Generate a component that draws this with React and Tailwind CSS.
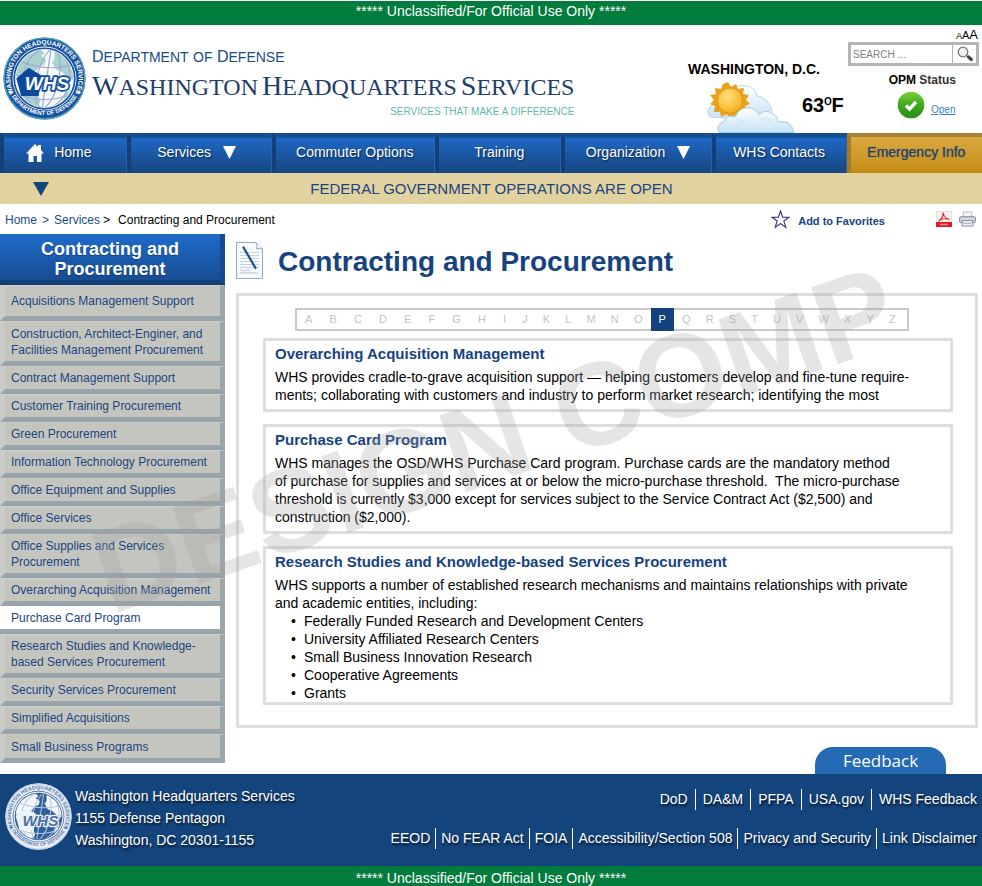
import React from "react";

const NAV = [
  { label: "Home", grow: "grow-[126]", shift: "pr-3", home: true },
  { label: "Services", grow: "grow-[145]", shift: "pr-2", menu: true },
  { label: "Commuter Options", grow: "grow-[164]" },
  { label: "Training", grow: "grow-[125]" },
  { label: "Organization", grow: "grow-[152]", menu: true },
  { label: "WHS Contacts", grow: "grow-[134]", shift: "pr-1" },
];

const SIDE = [
  ["Acquisitions Management Support", "h-9"],
  ["Construction, Architect-Enginer, and Facilities Management Procurement", "h-[45px]"],
  ["Contract Management Support", "h-7"],
  ["Customer Training Procurement", "h-7"],
  ["Green Procurement", "h-7"],
  ["Information Technology Procurement", "h-7"],
  ["Office Equipment and Supplies", "h-7"],
  ["Office Services", "h-7"],
  ["Office Supplies and Services Procurement", "h-11"],
  ["Overarching Acquisition Management", "h-7"],
  ["Purchase Card Program", "h-7"],
  ["Research Studies and Knowledge-based Services Procurement", "h-11"],
  ["Security Services Procurement", "h-7"],
  ["Simplified Acquisitions", "h-7"],
  ["Small Business Programs", "h-[29px]"],
];

const LETTERS = "ABCDEFGHIJKLMNOPQRSTUVWXYZ".split("");

const FOOTER_TOP = ["DoD", "DA&M", "PFPA", "USA.gov", "WHS Feedback"];
const FOOTER_BOTTOM = [
  "EEOD",
  "No FEAR Act",
  "FOIA",
  "Accessibility/Section 508",
  "Privacy and Security",
  "Link Disclaimer",
];

function Seal({ id, className, ring, ink, land, sea, badge, badgeInk, line, edge }) {
  return (
    <svg viewBox="0 0 100 100" className={"text-shadow-none " + className} role="img" aria-label="WHS seal">
      <defs>
        <path id={id + "-top"} d="M 12.2 66 A 41 41 0 1 1 87.8 66" />
        <path id={id + "-low"} d="M 11 72 A 45.5 45.5 0 0 0 89 72" />
        <clipPath id={id + "-globe"}>
          <circle cx="50" cy="50" r="34.500" />
        </clipPath>
      </defs>
      <circle cx="50" cy="50" r="49.500" fill={ring} />
      <circle cx="50" cy="50" r="48.600" fill="none" stroke={edge} strokeWidth="1.6" />
      <circle cx="50" cy="50" r="38.500" fill={sea} />
      <circle cx="50" cy="50" r="36.500" fill={sea} stroke={ring} strokeWidth="2" />
      <g clipPath={"url(#" + id + "-globe)"}>
        <path
          d="M14 40 L22 27 L33 18 L44 15 L50 19 L46 23 L52 27 L50 33 L44 35 L40 41 L34 42 L29 49 L18 52 Z M62 17 L70 20 L79 31 L85 43 L84 52 L76 47 L71 42 L64 39 L59 31 L62 27 Z M17 68 L33 67 L43 71 L45 78 L38 86 L24 79 Z M75 68 L85 60 L82 72 L72 80 Z"
          fill={land}
        />
        <g fill="none" stroke={line} strokeWidth="1.5">
          <ellipse cx="54" cy="50" rx="13" ry="36" transform="rotate(12 54 50)" />
          <ellipse cx="52" cy="50" rx="28" ry="37" transform="rotate(12 52 50)" />
          <path d="M58 14 L47 87 M20 29 Q52 42 83 34 M15 46 Q50 54 86 48 M20 69 Q50 82 82 69" />
        </g>
      </g>
      <path d="M31 37 L46 46 L43 71 L22 71 L16 50 Z" fill={badge} />
      <text
        x="53"
        y="64"
        textAnchor="middle"
        fontFamily="'Liberation Sans', Arial, sans-serif"
        fontWeight="700"
        fontStyle="italic"
        fontSize="23"
        fill={badgeInk}
        stroke={badge}
        strokeWidth="4"
        strokeLinejoin="round"
        paintOrder="stroke"
      >
        WHS
      </text>
      <g fontFamily="'Liberation Sans', Arial, sans-serif" fontWeight="700" fill={ink}>
        <text fontSize="7.900">
          <textPath href={"#" + id + "-top"} startOffset="50%" textAnchor="middle">
            WASHINGTON HEADQUARTERS SERVICES
          </textPath>
        </text>
        <text fontSize="7">
          <textPath href={"#" + id + "-low"} startOffset="50%" textAnchor="middle">
            DEPARTMENT OF DEFENSE
          </textPath>
        </text>
      </g>
      <circle cx="9" cy="66.500" r="1.800" fill={ink} />
      <circle cx="91" cy="66.500" r="1.800" fill={ink} />
    </svg>
  );
}

function Weather() {
  return (
    <svg viewBox="0 0 90 52" className="h-[52px] w-[90px]" aria-hidden="true">
      <defs>
        <linearGradient id="cloud" x1="0" y1="0" x2="0" y2="1">
          <stop offset="0" stopColor="#ffffff" />
          <stop offset="1" stopColor="#c4e2f6" />
        </linearGradient>
        <radialGradient id="sun" cx="40%" cy="35%" r="70%">
          <stop offset="0" stopColor="#ffe27a" />
          <stop offset="1" stopColor="#f5ae1c" />
        </radialGradient>
      </defs>
      <path
        d="M4 36 Q-1 30 6 24 Q8 14 22 12 Q30 2 42 5 Q50 7 51 15 Q62 16 66 30 L60 40 Z"
        fill="url(#cloud)"
        stroke="#bcd6e6"
        strokeWidth="1"
      />
      <path
        d="M22 1 L25 6 L30 3 L32 8 L38 7 L37 13 L43 14 L40 19 L44 23 L39 25 L41 31 L35 31 L34 37 L29 34 L24 38 L21 33 L15 36 L14 31 L8 31 L9 25 L4 23 L8 19 L4 14 L10 13 L9 7 L15 8 L17 3 Z"
        fill="#e9a11e"
      />
      <circle cx="24" cy="19.500" r="12.500" fill="url(#sun)" stroke="#dd9217" strokeWidth="0.8" />
      <path
        d="M13 51.500 Q9 43 19 40 Q20 33 29 36 Q34 25 44 27 Q51 28 53 34 Q59 27 67 33 Q72 35 72 41 Q85 38 88 51.500 Z"
        fill="url(#cloud)"
        stroke="#a9cbe0"
        strokeWidth="1"
      />
      <path d="M31 44 Q36 37 43 43 M54 40 Q60 34 65 41" fill="none" stroke="#d3e8f5" strokeWidth="2" />
    </svg>
  );
}

function Search() {
  return (
    <form
      className="flex h-6 w-[131px] border-[3px] border-[#b5b5b5] bg-white"
      onSubmit={(e) => e.preventDefault()}
    >
      <input
        type="text"
        aria-label="Search"
        placeholder="SEARCH ..."
        className="min-w-0 flex-1 px-0.5 text-[10px] text-[#555] outline-none placeholder:text-[#808080]"
      />
      <button type="submit" aria-label="Go" className="flex w-6 items-center justify-center border-l border-[#b5b5b5]">
        <svg viewBox="0 0 16 16" className="size-4" aria-hidden="true">
          <path d="M9.500 9.500 L11 11" stroke="#888" strokeWidth="1.5" />
          <path d="M11.500 11 L14.300 13.500" stroke="#444" strokeWidth="3.200" strokeLinecap="round" />
          <circle cx="6" cy="6" r="4.800" fill="#e9eef2" stroke="#777" strokeWidth="1.300" />
          <path d="M3.500 5.500 Q4 3.500 6 3.200" fill="none" stroke="#fff" strokeWidth="1.200" />
        </svg>
      </button>
    </form>
  );
}

function Caps({ words, big, small }) {
  return words.map((w, i) => (
    <React.Fragment key={w}>
      {i > 0 && " "}
      <span className={w === "of" ? small : big}>{w === "of" ? "OF" : w[0]}</span>
      {w !== "of" && <span className={small}>{w.slice(1).toUpperCase()}</span>}
    </React.Fragment>
  ));
}

function Header() {
  return (
    <header className="flex h-[108px] justify-between">
      <div className="flex pt-3 pl-[3px]">
        <Seal
          id="seal"
          className="size-[83px] shrink-0"
          ring="#16529f"
          ink="#ffffff"
          land="#a9d3cc"
          sea="#f4f9fa"
          badge="#0b4a9b"
          badgeInk="#ffffff"
          line="#a3a8d8"
          edge="#4fa3b4"
        />
        <div className="flex flex-col pt-2.5 pl-[6px]">
          <p className="h-5 leading-5 whitespace-nowrap text-[#1b4c8a]">
            <Caps words={["Department", "of", "Defense"]} big="text-[16px]" small="text-[14px]" />
          </p>
          <h1 className="mt-[3px] h-8 font-['Liberation_Serif',serif] leading-8 whitespace-nowrap text-[#1f3d6b]">
            <Caps words={["Washington", "Headquarters", "Services"]} big="text-[28px]" small="text-[24px]" />
          </h1>
          <p className="mt-0.5 text-right text-[10px] leading-4 whitespace-nowrap text-[#5db9ab]">
            SERVICES THAT MAKE A DIFFERENCE
          </p>
        </div>
      </div>

      <div className="flex">
        <div className="w-[160px] pt-9">
          <p className="text-[14px] leading-4 font-bold whitespace-nowrap text-black">WASHINGTON, D.C.</p>
          <div className="flex items-center gap-1.5 pt-1 pl-[18px]">
            <Weather />
            <p className="pb-1 text-[20px] leading-6 font-bold whitespace-nowrap text-black">
              63<span className="font-normal">º</span>F
            </p>
          </div>
        </div>
        <div className="flex w-[134px] flex-col pr-[3px]">
          <p className="flex h-[17px] items-baseline justify-end pr-px text-black">
            <span className="text-[9px]">A</span>
            <span className="text-[11px]">A</span>
            <span className="text-[13px]">A</span>
          </p>
          <Search />
          <p className="mt-1.5 pr-[23px] text-right text-[12px] leading-4 font-bold whitespace-nowrap text-black">
            OPM <span className="text-[#333]">Status</span>
          </p>
          <div className="flex items-center gap-1.5 pt-[3px] pl-[49px]">
            <svg viewBox="0 0 28 28" className="size-7" aria-hidden="true">
              <defs>
                <linearGradient id="ok" x1="0" y1="0" x2="0" y2="1">
                  <stop offset="0" stopColor="#7fd03c" />
                  <stop offset="0.5" stopColor="#3fa81c" />
                  <stop offset="1" stopColor="#2b8c1c" />
                </linearGradient>
              </defs>
              <circle cx="14" cy="14" r="13.300" fill="url(#ok)" />
              <path d="M9 14.500 L12.500 18 L19 11" fill="none" stroke="#fff" strokeWidth="3.400" />
            </svg>
            <a href="#open" className="pt-2.5 text-[10px] leading-4 text-[#2f7fd6] underline">
              Open
            </a>
          </div>
        </div>
      </div>
    </header>
  );
}

function Nav() {
  return (
    <nav className="flex h-10 text-[14px] text-white">
      {NAV.map((n) => (
        <a
          key={n.label}
          href="#nav"
          className={
            n.grow +
            " flex basis-0 items-center justify-center border-t-[5px] border-r border-l-[4px] border-t-[#14508f] border-r-[#2563ae] border-l-[#134078] bg-linear-to-b from-[#1e68c6] to-[#17467f] pb-1.5 whitespace-nowrap text-shadow-[1px_1px_2px_rgba(0,0,0,0.6)]"
          }
        >
          <span className={"flex items-center " + (n.shift || "")}>
            {n.home && (
              <svg viewBox="0 0 18 18" className="mr-2.5 size-[18px]" aria-hidden="true">
                <path
                  d="M9 0 L12 3 V1 H15 V6 L18 9.500 H15.500 V18 H11 V12 H7.500 V18 H2.500 V9.500 H0 Z"
                  fill="#fff"
                />
              </svg>
            )}
            {n.label}
            {n.menu && (
              <svg viewBox="0 0 12 12" className="ml-3 size-[13px]" aria-hidden="true">
                <path d="M0 0 H12 L6 12 Z" fill="#fff" />
              </svg>
            )}
          </span>
        </a>
      ))}
      <a
        href="#emergency"
        className="flex grow-[136] basis-0 items-center justify-center border-t-[4px] border-l-[4px] border-t-[#a5843a] border-l-[#a57c22] bg-linear-to-b from-[#dba93f] to-[#c48d12] pb-1.5 whitespace-nowrap text-[#1f4272] text-shadow-[0_0_1px_rgba(31,66,114,0.7)]"
      >
        Emergency Info
      </a>
    </nav>
  );
}

function Crumbs() {
  return (
    <div className="flex h-[30px] items-center justify-between pr-1.5 pl-[5px]">
      <div className="flex items-center pt-0.5 text-[12px]">
        <a href="#home" className="text-[#1b4c8a]">
          Home
        </a>
        <span className="px-[5px] text-[#1b4c8a]">&gt;</span>
        <a href="#services" className="text-[#1b4c8a]">
          Services
        </a>
        <span className="pl-[3px] text-black">&gt;</span>
        <span className="pl-2 text-black">Contracting and Procurement</span>
      </div>
      <div className="flex items-center">
        <svg viewBox="0 0 20 20" className="size-[19px]" aria-hidden="true">
          <path
            d="M10 1 L12.200 7.500 L19 7.700 L13.500 11.600 L15.600 18.300 L10 14.200 L4.400 18.300 L6.500 11.600 L1 7.700 L7.800 7.500 Z"
            fill="none"
            stroke="#40308c"
            strokeWidth="1.200"
          />
        </svg>
        <a href="#favorites" className="pt-1 pl-2 text-[11px] font-bold text-[#1b4480]">
          Add to Favorites
        </a>
        <svg viewBox="0 0 16 16" className="ml-[51px] size-4" aria-hidden="true">
          <rect x="0.500" y="0.500" width="15" height="15" fill="#f6f1f1" stroke="#e6dede" />
          <path
            d="M7 1.500 Q8 7 13.500 8.300 Q6 6.500 2.500 10.300 Q7.500 7 7 1.500"
            fill="none"
            stroke="#e0262a"
            strokeWidth="1.100"
          />
          <rect y="11" width="16" height="5" fill="#e01a20" />
          <path d="M4.500 13.500 H11.500" stroke="#f6b5b5" strokeWidth="1.500" strokeDasharray="2 0.700" />
        </svg>
        <svg viewBox="0 0 18 16" className="ml-[7px] h-4 w-[17px]" aria-hidden="true">
          <path d="M4.500 6 V0.500 H13.500 V6" fill="#f2f4f8" stroke="#b5b8c2" />
          <rect x="0.500" y="5.500" width="17" height="6.500" rx="1.500" fill="#c4c7d2" stroke="#9092a2" />
          <path d="M2 8 H16" stroke="#eceef3" />
          <path d="M4 9.500 H14 L15 15.500 H3 Z" fill="#eef0f6" stroke="#85889a" />
          <path d="M5 12.500 H13" stroke="#a0a3b0" />
        </svg>
      </div>
    </div>
  );
}

function Sidebar() {
  return (
    <aside className="w-[225px] shrink-0 text-[12px] leading-4">
      <h2 className="flex h-[51px] items-center justify-center border-r-[5px] border-b-[5px] border-r-[#174a8c] border-b-[#133f78] bg-linear-to-b from-[#1e6bca] to-[#174d93] px-8 pt-1 text-center text-[18px] leading-5 font-bold text-white text-shadow-[0_1px_1px_rgba(0,0,0,0.3)]">
        Contracting and Procurement
      </h2>
      <ul>
        {SIDE.map(([label, height]) => {
          const current = label === "Purchase Card Program";
          return (
            <li key={label}>
              <a
                href="#item"
                aria-current={current ? "page" : undefined}
                className={
                  height +
                  " flex items-center border-r-[5px] border-b-[5px] border-r-[#9ba6ad] border-b-[#98a4ab] text-[#1a4580] " +
                  (current
                    ? "border-l-0 bg-white pl-[11px]"
                    : "border-t border-l-[5px] border-t-[#cdcdc9] border-l-[#cbccc8] bg-[#c5c5c0] pl-1.5")
                }
              >
                {label}
              </a>
            </li>
          );
        })}
      </ul>
    </aside>
  );
}

function Section({ title, children }) {
  return (
    <section className="border-[3px] border-[#dedede] pt-1 pb-[5px] pl-[9px] last:pb-0">
      <h3 className="text-[15px] leading-[18px] font-bold text-[#16437f]">{title}</h3>
      <div className="mt-[5px] text-[14px] leading-[18px] text-black">{children}</div>
    </section>
  );
}

function Main() {
  return (
    <main className="min-w-0 flex-1 pr-1 pl-[11px]">
      <div className="flex h-[59px] items-start pt-2">
        <svg viewBox="0 0 27 37" className="h-[37px] w-[27px] shrink-0" aria-hidden="true">
          <path d="M0.500 0.500 H20 L26.500 7 V36.500 H0.500 Z" fill="#f7f9fc" stroke="#8fa9c9" />
          <path d="M20 0.500 Q22 4 20.500 7 Q24 5.500 26.500 7" fill="#fff" stroke="#8fa9c9" />
          <path
            d="M4 10.500 H23 M4 13.500 H23 M4 16.500 H23 M4 19.500 H23 M4 22.500 H23 M4 25.500 H23"
            stroke="#c4d2e4"
          />
          <path d="M4 29 Q5 27 7 28.500 T10 28.500 T14 28.500 M4 31 H22" fill="none" stroke="#9db3cf" strokeWidth="0.8" />
          <path d="M7.500 5.500 L19.500 26" stroke="#1d4f8c" strokeWidth="2.200" strokeLinecap="round" />
        </svg>
        <h2 className="pl-[15px] text-[28px] leading-10 font-bold text-[#16437f]">Contracting and Procurement</h2>
      </div>
      <div className="border-[3px] border-[#dedede] pt-3 pr-[22px] pb-5 pl-6">
        <div className="mr-11 ml-8 flex h-[23px] items-stretch justify-between border-2 border-[#cacaca] pr-1 text-[11px] text-[#c4c4c4]">
          {LETTERS.map((l, i) => (
            <button
              key={l}
              type="button"
              className={l === "P" ? "-my-0.5 bg-[#14427e] px-2 text-white" : i < 9 ? "px-2" : "px-[7px]"}
            >
              {l}
            </button>
          ))}
        </div>
        <div className="mt-[7px] flex flex-col gap-3">
          <Section title="Overarching Acquisition Management">
            WHS provides cradle-to-grave acquisition support — helping customers develop and fine-tune require-
            <br />
            ments; collaborating with customers and industry to perform market research; identifying the most
          </Section>
          <Section title="Purchase Card Program">
            WHS manages the OSD/WHS Purchase Card program. Purchase cards are the mandatory method
            <br />
            of purchase for supplies and services at or below the micro-purchase threshold.&nbsp; The micro-purchase
            <br />
            threshold is currently $3,000 except for services subject to the Service Contract Act ($2,500) and
            <br />
            construction ($2,000).
          </Section>
          <Section title="Research Studies and Knowledge-based Services Procurement">
            WHS supports a number of established research mechanisms and maintains relationships with private
            <br />
            and academic entities, including:
            <ul className="list-none">
              {[
                "Federally Funded Research and Development Centers",
                "University Affiliated Research Centers",
                "Small Business Innovation Research",
                "Cooperative Agreements",
                "Grants",
              ].map((t) => (
                <li key={t} className="flex pl-4">
                  <span className="w-[13px] shrink-0">•</span>
                  {t}
                </li>
              ))}
            </ul>
          </Section>
        </div>
      </div>
    </main>
  );
}

function FooterLinks({ items, pad }) {
  return (
    <ul className="flex h-[21px] items-center justify-end divide-x divide-white">
      {items.map((t) => (
        <li key={t} className={"flex h-full items-center whitespace-nowrap last:pr-0 " + pad}>
          <a href="#footer">{t}</a>
        </li>
      ))}
    </ul>
  );
}

function Footer() {
  return (
    <footer className="text-[14px] text-white text-shadow-[1px_2px_2px_rgba(0,0,0,0.7)]">
      <div className="flex justify-between bg-[#14447c] pr-[5px] pb-[15px]">
        <div className="flex pt-[9px] pl-[5px]">
          <Seal
            id="seal-footer"
            className="size-[67px] shrink-0"
            ring="#e8edf5"
            ink="#5a7cae"
            land="#f2f5fa"
            sea="#2f5f9c"
            badge="#eef2f8"
            badgeInk="#4a70a6"
            line="#b9c9e0"
            edge="#c3d0e4"
          />
          <address className="pt-0.5 pl-[3px] leading-[22px] whitespace-nowrap not-italic">
            Washington Headquarters Services
            <br />
            1155 Defense Pentagon
            <br />
            Washington, DC 20301-1155
          </address>
        </div>
        <div className="flex flex-col gap-[18px] pt-[15px]">
          <FooterLinks items={FOOTER_TOP} pad="px-[7px]" />
          <FooterLinks items={FOOTER_BOTTOM} pad="px-[5px]" />
        </div>
      </div>
      <p className="h-5 bg-[#027c3c] pt-0.5 text-center text-[14px] leading-5 whitespace-nowrap text-shadow-none">
        ***** Unclassified/For Official Use Only *****
      </p>
    </footer>
  );
}

export default function App() {
  return (
    <div className="relative overflow-hidden bg-white pt-px font-['Liberation_Sans',Arial,sans-serif]">
      <p className="h-6 bg-[#027c3c] text-center text-[14px] leading-5 whitespace-nowrap text-white">
        ***** Unclassified/For Official Use Only *****
      </p>
      <Header />
      <Nav />
      <div className="flex h-[31px] items-center bg-[#e2d29f] text-[#1b4480]">
        <svg viewBox="0 0 16 14" className="ml-[33px] h-3.5 w-4" aria-hidden="true">
          <path d="M0 0 H16 L8 14 Z" fill="#14447c" />
        </svg>
        <p className="flex-1 pt-0.5 pr-12 text-center text-[15px]">FEDERAL GOVERNMENT OPERATIONS ARE OPEN</p>
      </div>
      <Crumbs />
      <div className="flex items-start">
        <Sidebar />
        <Main />
      </div>
      <div className="-mt-4 flex justify-end pr-9">
        <button
          type="button"
          className="h-[27px] w-[131px] rounded-t-[18px] bg-[#246ab5] font-['Open_Sans',sans-serif] text-[17px] leading-[27px] text-white"
        >
          Feedback
        </button>
      </div>
      <Footer />
      <div
        aria-hidden="true"
        className="pointer-events-none absolute top-[373px] left-[75px] -rotate-[19deg] text-[118px] leading-[132px] font-bold whitespace-nowrap text-[#a0a0a0]/27"
      >
        DESIGN COMP
      </div>
    </div>
  );
}
